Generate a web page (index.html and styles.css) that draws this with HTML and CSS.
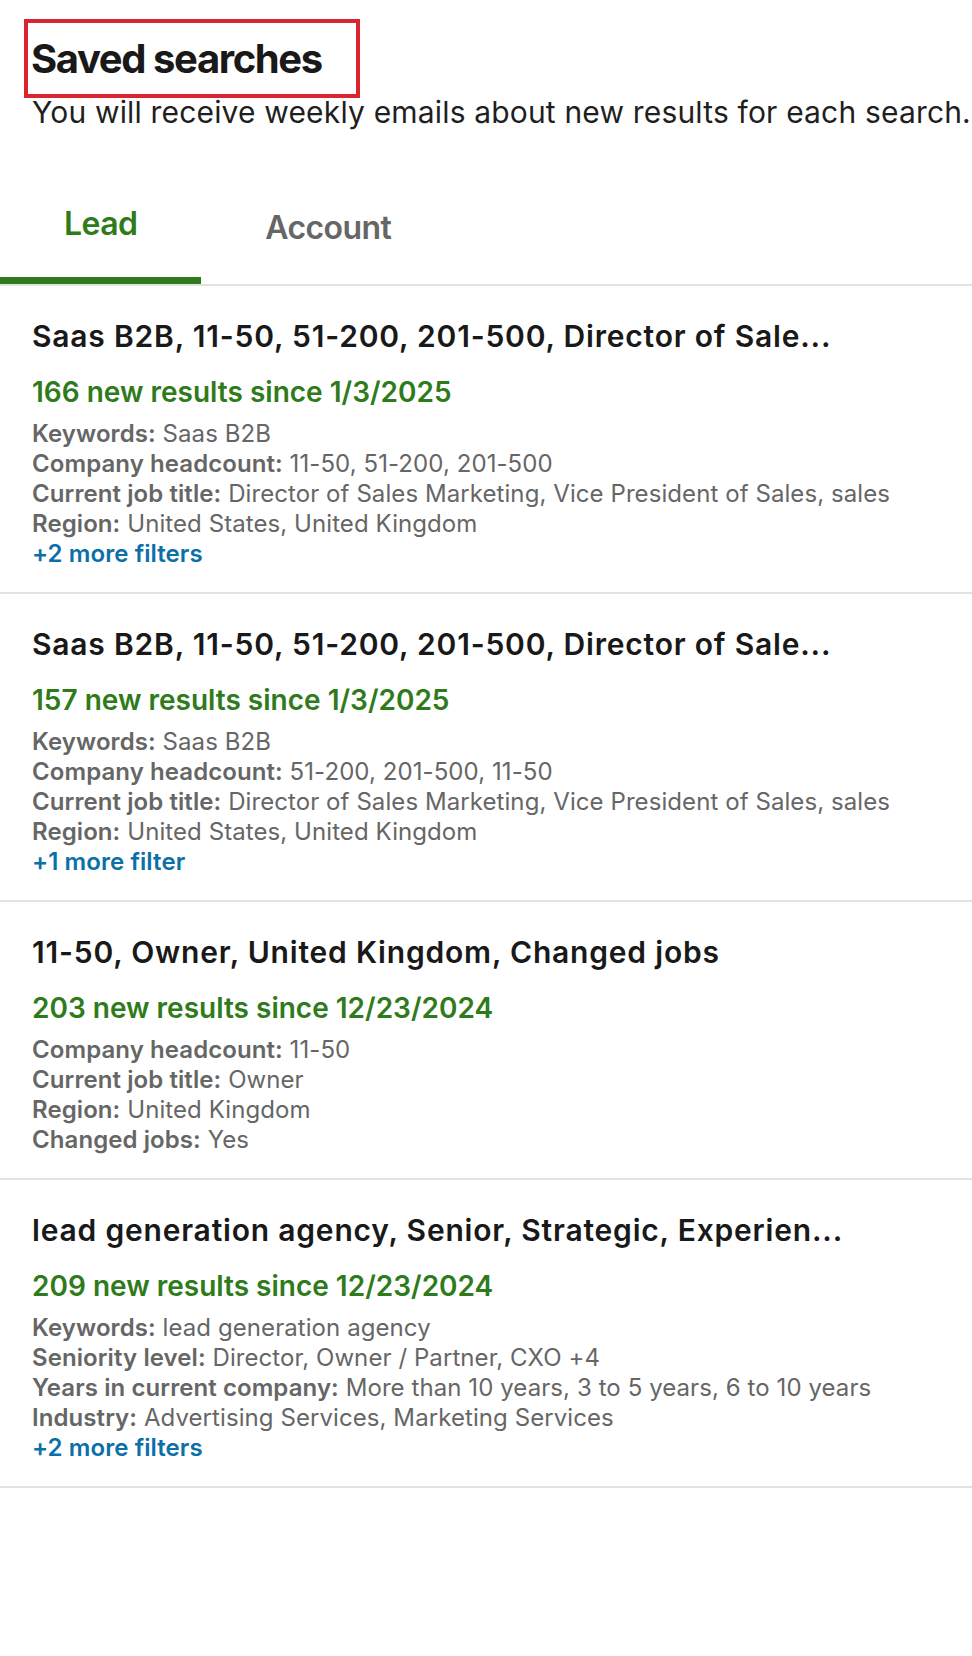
FILE: index.html
```html
<!DOCTYPE html>
<html lang="en">
<head>
  <meta charset="UTF-8">
  <meta name="viewport" content="width=device-width, initial-scale=1.0">
  <title>Saved searches</title>
  <link rel="stylesheet" href="styles.css">
</head>
<body>
  <header class="page-header">
    <div class="title-box">
      <h1>Saved searches</h1>
    </div>
    <p class="subtitle">You will receive weekly emails about new results for each search.</p>
  </header>

  <nav class="tabs">
    <a class="tab tab-active" href="#">Lead</a>
    <a class="tab" href="#">Account</a>
  </nav>

  <ul class="search-list">
    <li class="search-card">
      <h2 class="search-title">Saas B2B, 11-50, 51-200, 201-500, Director of Sale...</h2>
      <p class="new-results">166 new results since 1/3/2025</p>
      <ul class="filters">
        <li><b>Keywords:</b> Saas B2B</li>
        <li><b>Company headcount:</b> 11-50, 51-200, 201-500</li>
        <li><b>Current job title:</b> Director of Sales Marketing, Vice President of Sales, sales</li>
        <li><b>Region:</b> United States, United Kingdom</li>
        <li><a class="more-link" href="#">+2 more filters</a></li>
      </ul>
    </li>

    <li class="search-card">
      <h2 class="search-title">Saas B2B, 11-50, 51-200, 201-500, Director of Sale...</h2>
      <p class="new-results">157 new results since 1/3/2025</p>
      <ul class="filters">
        <li><b>Keywords:</b> Saas B2B</li>
        <li><b>Company headcount:</b> 51-200, 201-500, 11-50</li>
        <li><b>Current job title:</b> Director of Sales Marketing, Vice President of Sales, sales</li>
        <li><b>Region:</b> United States, United Kingdom</li>
        <li><a class="more-link" href="#">+1 more filter</a></li>
      </ul>
    </li>

    <li class="search-card">
      <h2 class="search-title">11-50, Owner, United Kingdom, Changed jobs</h2>
      <p class="new-results">203 new results since 12/23/2024</p>
      <ul class="filters">
        <li><b>Company headcount:</b> 11-50</li>
        <li><b>Current job title:</b> Owner</li>
        <li><b>Region:</b> United Kingdom</li>
        <li><b>Changed jobs:</b> Yes</li>
      </ul>
    </li>

    <li class="search-card">
      <h2 class="search-title">lead generation agency, Senior, Strategic, Experien...</h2>
      <p class="new-results">209 new results since 12/23/2024</p>
      <ul class="filters">
        <li><b>Keywords:</b> lead generation agency</li>
        <li><b>Seniority level:</b> Director, Owner / Partner, CXO +4</li>
        <li><b>Years in current company:</b> More than 10 years, 3 to 5 years, 6 to 10 years</li>
        <li><b>Industry:</b> Advertising Services, Marketing Services</li>
        <li><a class="more-link" href="#">+2 more filters</a></li>
      </ul>
    </li>
  </ul>
</body>
</html>
```

FILE: styles.css
```css
body {
  font-family: Inter, "Liberation Sans", sans-serif;
  margin: 0;
  background-color: #ffffff;
  color: #191919;
}

.page-header {
  padding: 19px 0 0 24px;
}

.title-box {
  display: inline-block;
  width: 336px;
  box-sizing: border-box;
  border: 4px solid #dc2430;
  padding: 12px 0 11px 3px;
}

.title-box h1 {
  margin: 0;
  font-size: 40px;
  line-height: 48px;
  font-weight: 700;
  letter-spacing: -1.4px;
}

.subtitle {
  margin: 0 0 0 8px;
  font-size: 30px;
  line-height: 28px;
  letter-spacing: 0.17px;
  color: #1f1f1f;
}

.tabs {
  display: flex;
  align-items: flex-end;
  margin-top: 78px;
  border-bottom: 2px solid #e2e2e2;
}

.tab {
  padding: 0 64px 36px;
  font-size: 32px;
  line-height: 40px;
  font-weight: 600;
  letter-spacing: -0.6px;
  color: #666666;
  text-decoration: none;
}

.tab-active {
  padding-bottom: 33px;
  color: #2f7b1b;
  border-bottom: 7px solid #2f7b1b;
}

.search-list {
  list-style: none;
  margin: 0;
  padding: 0;
}

.search-card {
  padding: 32px 32px 23px;
  border-bottom: 2px solid #e2e2e2;
}

.search-title {
  margin: 0;
  font-size: 30px;
  line-height: 36px;
  font-weight: 600;
  letter-spacing: 0.8px;
  color: #191919;
}

.new-results {
  margin: 21px 0 0;
  font-size: 28px;
  line-height: 34px;
  font-weight: 600;
  color: #2f7b1b;
}

.filters {
  list-style: none;
  margin: 10px 0 0;
  padding: 0;
  font-size: 24px;
  line-height: 30px;
  letter-spacing: 0.08px;
  color: #666666;
}

.filters b {
  font-weight: 600;
}

.more-link {
  font-weight: 600;
  color: #0b6fa8;
  text-decoration: none;
}
```
